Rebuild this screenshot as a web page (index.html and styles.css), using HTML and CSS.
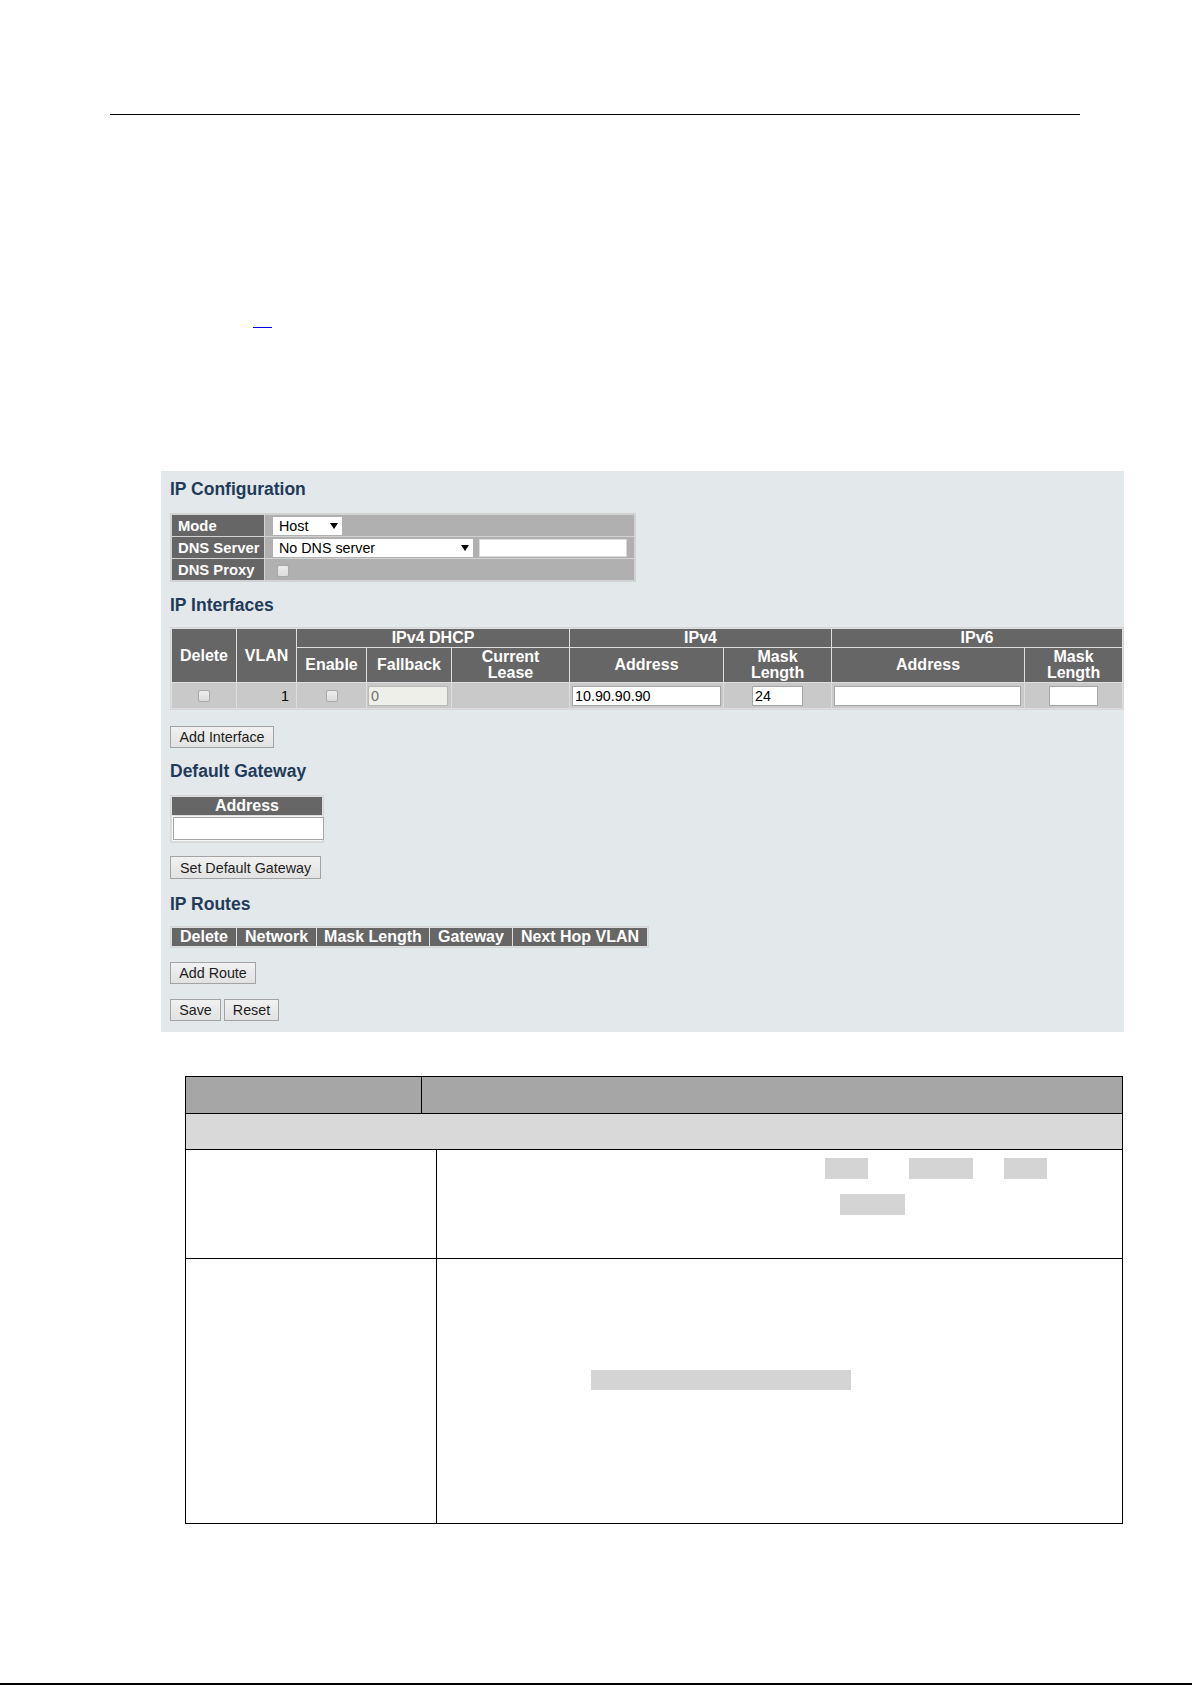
FILE: index.html
```html
<!DOCTYPE html>
<html lang="en">
<head>
<meta charset="utf-8">
<title>IP Configuration</title>
<link rel="stylesheet" href="styles.css">
</head>
<body>
<div class="sheet">
  <div class="top-rule"></div>
  <a class="ref" href="#"></a>

  <section class="panel">
    <h2 class="title">IP Configuration</h2>
    <table class="grid cfg">
      <tr>
        <th>Mode</th>
        <td><span class="select sel-mode">Host<svg class="caret" viewBox="0 0 8 6"><path d="M0 0H8L4 6Z"/></svg></span></td>
      </tr>
      <tr>
        <th>DNS Server</th>
        <td><span class="select sel-dns">No DNS server<svg class="caret" viewBox="0 0 8 6"><path d="M0 0H8L4 6Z"/></svg></span><span class="dns-field"></span></td>
      </tr>
      <tr>
        <th>DNS Proxy</th>
        <td><span class="check check-proxy"></span></td>
      </tr>
    </table>

    <h2 class="title t-gap">IP Interfaces</h2>
    <table class="grid ifaces">
      <colgroup>
        <col class="c-del"><col class="c-vlan"><col class="c-en"><col class="c-fb"><col class="c-lease">
        <col class="c-a4"><col class="c-m4"><col class="c-a6"><col class="c-m6">
      </colgroup>
      <tr class="h1">
        <th rowspan="2">Delete</th>
        <th rowspan="2">VLAN</th>
        <th colspan="3">IPv4 DHCP</th>
        <th colspan="2">IPv4</th>
        <th colspan="2">IPv6</th>
      </tr>
      <tr class="h2">
        <th>Enable</th>
        <th>Fallback</th>
        <th>Current<br>Lease</th>
        <th>Address</th>
        <th>Mask<br>Length</th>
        <th>Address</th>
        <th>Mask<br>Length</th>
      </tr>
      <tr class="row">
        <td class="ctr"><span class="check"></span></td>
        <td class="num">1</td>
        <td class="ctr"><span class="check"></span></td>
        <td><input class="field fb" value="0" readonly></td>
        <td></td>
        <td><input class="field a4" value="10.90.90.90"></td>
        <td class="ctr"><input class="field m4" value="24"></td>
        <td><input class="field a6" value=""></td>
        <td class="ctr"><input class="field m6" value=""></td>
      </tr>
    </table>

    <div class="actions a-iface"><button class="btn b-iface">Add Interface</button></div>

    <h2 class="title t-gw">Default Gateway</h2>
    <table class="grid gw">
      <tr><th>Address</th></tr>
      <tr><td class="gw-cell"><input class="field gw-in" value=""></td></tr>
    </table>

    <div class="actions a-gw"><button class="btn b-gw">Set Default Gateway</button></div>

    <h2 class="title t-routes">IP Routes</h2>
    <table class="grid routes">
      <colgroup>
        <col class="r-del"><col class="r-net"><col class="r-mask"><col class="r-gw"><col class="r-hop">
      </colgroup>
      <tr><th>Delete</th><th>Network</th><th>Mask Length</th><th>Gateway</th><th>Next Hop VLAN</th></tr>
    </table>

    <div class="actions a-route"><button class="btn b-route">Add Route</button></div>
    <div class="actions a-save"><button class="btn b-save">Save</button><button class="btn b-reset">Reset</button></div>
  </section>

  <div class="desc">
    <div class="desc-head"><div class="dh-name"></div><div class="dh-text"></div></div>
    <div class="desc-section"></div>
    <div class="desc-row r1">
      <div class="dc-name"></div>
      <div class="dc-text">
        <div class="line"><span class="hl w43 off388"></span><span class="hl w64 gap41"></span><span class="hl w43 gap31"></span></div>
        <div class="line"><span class="hl w65 off403"></span></div>
      </div>
    </div>
    <div class="desc-row r2">
      <div class="dc-name"></div>
      <div class="dc-text">
        <div class="line"><span class="hl hl-low w260 off154"></span></div>
      </div>
    </div>
  </div>

  <div class="page-foot"></div>
</div>
</body>
</html>
```

FILE: styles.css
```css
html, body {
  margin: 0;
  padding: 0;
  background: #fff;
}

.sheet {
  position: relative;
  width: 1192px;
  height: 1685px;
  overflow: hidden;
  font-family: "Liberation Sans", Arial, sans-serif;
  color: #000;
}

/* running header rule */
.top-rule {
  margin: 114px 0 0 110px;
  width: 970px;
  border-top: 1px solid #000;
}

/* reference link */
.ref {
  display: block;
  margin: 200px 0 0 253px;
  width: 19px;
  height: 12px;
  border-bottom: 1px solid #0000e6;
}

/* ---------- configuration panel ---------- */
.panel {
  box-sizing: border-box;
  margin: 143px 0 0 161px;
  width: 963px;
  height: 561px;
  padding: 8px 0 0 9px;
  background: #e3e8eb;
  overflow: hidden;
}

.title {
  margin: 0;
  font-size: 17.5px;
  line-height: 20px;
  font-weight: bold;
  color: #1f3b59;
}
.t-gap { margin-top: 13px; }
.t-gw { margin-top: 13px; }
.t-routes { margin-top: 15px; }

.grid {
  border-collapse: separate;
  border-spacing: 1px;
  border: 1px solid #d6d6d6;
  background: #dedede;
}
.grid th {
  background: #666;
  color: #fff;
  font-weight: bold;
  font-size: 16px;
  line-height: 16px;
  padding: 0;
  text-align: center;
  vertical-align: middle;
  white-space: nowrap;
}
.grid td {
  padding: 0;
  vertical-align: middle;
  font-size: 14.3px;
}

/* mode / dns table */
.cfg {
  margin-top: 14px;
  width: 466px;
  table-layout: fixed;
  background: #d2d2d2;
  border-color: #d2d2d2;
}
.cfg tr { height: 21px; }
.cfg th {
  width: 92px;
  text-align: left;
  padding-left: 6px;
  box-sizing: border-box;
  font-size: 14.8px;
}
.cfg td {
  background: #b0b0b0;
  padding-left: 8px;
  line-height: 0;
}

.select {
  box-sizing: border-box;
  display: inline-flex;
  align-items: center;
  justify-content: space-between;
  height: 18px;
  padding: 0 4px 0 6px;
  background: #fff;
  font-size: 14.3px;
  line-height: 18px;
  color: #000;
  vertical-align: middle;
}
.sel-mode { width: 69px; }
.sel-dns { width: 200px; }
.caret {
  width: 8px;
  height: 6px;
  fill: #000;
}
.dns-field {
  box-sizing: border-box;
  display: inline-block;
  width: 148px;
  height: 18px;
  margin-left: 6px;
  background: #fff;
  border: 1px solid #dadada;
  vertical-align: middle;
}

.check {
  box-sizing: border-box;
  display: inline-block;
  width: 12px;
  height: 12px;
  border: 1px solid #a9a9a9;
  border-radius: 2px;
  background: linear-gradient(#ececec, #dcdcdc);
  vertical-align: middle;
}
.check-proxy { margin-left: 4px; margin-top: 2px; }

/* interfaces table */
.ifaces {
  margin-top: 12px;
  table-layout: fixed;
  width: 954px;
}
.c-del { width: 64px; }
.c-vlan { width: 59px; }
.c-en { width: 69px; }
.c-fb { width: 84px; }
.c-lease { width: 117px; }
.c-a4 { width: 153px; }
.c-m4 { width: 107px; }
.c-a6 { width: 192px; }
.c-m6 { width: 97px; }
.ifaces .h1 { height: 18px; }
.ifaces .h2 { height: 34px; }
.ifaces .row { height: 25px; }
.ifaces .row td {
  background: #c9c9c9;
  line-height: 0;
}
.ifaces td.ctr { text-align: center; }
.ifaces td.num {
  text-align: right;
  padding-right: 7px;
  line-height: 16px;
}

.field {
  box-sizing: border-box;
  height: 20px;
  margin: 0;
  padding: 0 2px;
  border: 1px solid #a6a6a6;
  border-radius: 0;
  background: #fff;
  font-family: "Liberation Sans", Arial, sans-serif;
  font-size: 14.3px;
  color: #000;
  vertical-align: middle;
  outline: none;
}
.fb {
  width: 80px;
  margin-left: 1px;
  background: #efefe9;
  color: #707070;
  border-color: #b8b8b8;
}
.a4 { width: 149px; margin-left: 2px; }
.m4 { width: 51px; }
.a6 { width: 187px; margin-left: 2px; }
.m6 { width: 49px; }

/* gateway table */
.gw {
  margin-top: 14px;
  width: 154px;
  table-layout: fixed;
}
.gw tr:first-child { height: 18px; }
.gw .gw-cell {
  background: #f5f5f5;
  padding: 1px 0 1px 1px;
  line-height: 0;
}
.gw-in {
  width: 151px;
  height: 23px;
}

/* routes table */
.routes {
  margin-top: 12px;
  table-layout: fixed;
  width: 479px;
}
.routes tr { height: 18px; }
.r-del { width: 64px; }
.r-net { width: 79px; }
.r-mask { width: 112px; }
.r-gw { width: 82px; }
.r-hop { width: 134px; }

/* buttons */
.actions {
  display: flex;
  gap: 3px;
  line-height: 0;
}
.a-iface { margin-top: 16px; }
.a-gw { margin-top: 13px; }
.a-route { margin-top: 14px; }
.a-save { margin-top: 15px; }

.btn {
  box-sizing: border-box;
  height: 22px;
  margin: 0;
  padding: 0;
  border: 1px solid #a3a3a3;
  border-radius: 0;
  background: linear-gradient(#f1f1f1, #e2e2e2);
  font-family: "Liberation Sans", Arial, sans-serif;
  font-size: 14.3px;
  line-height: 20px;
  color: #1c1c1c;
  text-align: center;
}
.b-iface { width: 104px; }
.b-gw { width: 151px; height: 23px; }
.b-route { width: 86px; }
.b-save { width: 51px; }
.b-reset { width: 55px; }

/* ---------- parameter description table ---------- */
.desc {
  margin: 44px 0 0 185px;
  width: 938px;
}
.desc-head {
  box-sizing: border-box;
  display: grid;
  grid-template-columns: 236px 1fr;
  height: 38px;
  border: 1px solid #000;
  background: #a6a6a6;
}
.dh-name {
  border-right: 1px solid #000;
}
.desc-section {
  box-sizing: border-box;
  height: 36px;
  border: 1px solid #000;
  border-top: 0;
  background: #d9d9d9;
}
.desc-row {
  box-sizing: border-box;
  display: grid;
  grid-template-columns: 251px 1fr;
  border: 1px solid #000;
  border-top: 0;
}
.desc-row.r1 { height: 109px; }
.desc-row.r2 { height: 265px; }
.dc-name {
  border-right: 1px solid #000;
}
.r1 .dc-text { padding-top: 8px; }
.r2 .dc-text { padding-top: 111px; }
.line {
  display: flex;
  height: 36px;
  align-items: flex-start;
}
.hl {
  display: block;
  height: 21px;
  background: #d4d4d4;
}
.hl-low { height: 20px; }
.w43 { width: 43px; }
.w64 { width: 64px; }
.w65 { width: 65px; }
.w260 { width: 260px; }
.off388 { margin-left: 388px; }
.off403 { margin-left: 403px; }
.off154 { margin-left: 154px; }
.gap41 { margin-left: 41px; }
.gap31 { margin-left: 31px; }

/* page edge rule */
.page-foot {
  margin-top: 159px;
  height: 2px;
  background: #000;
}
```
